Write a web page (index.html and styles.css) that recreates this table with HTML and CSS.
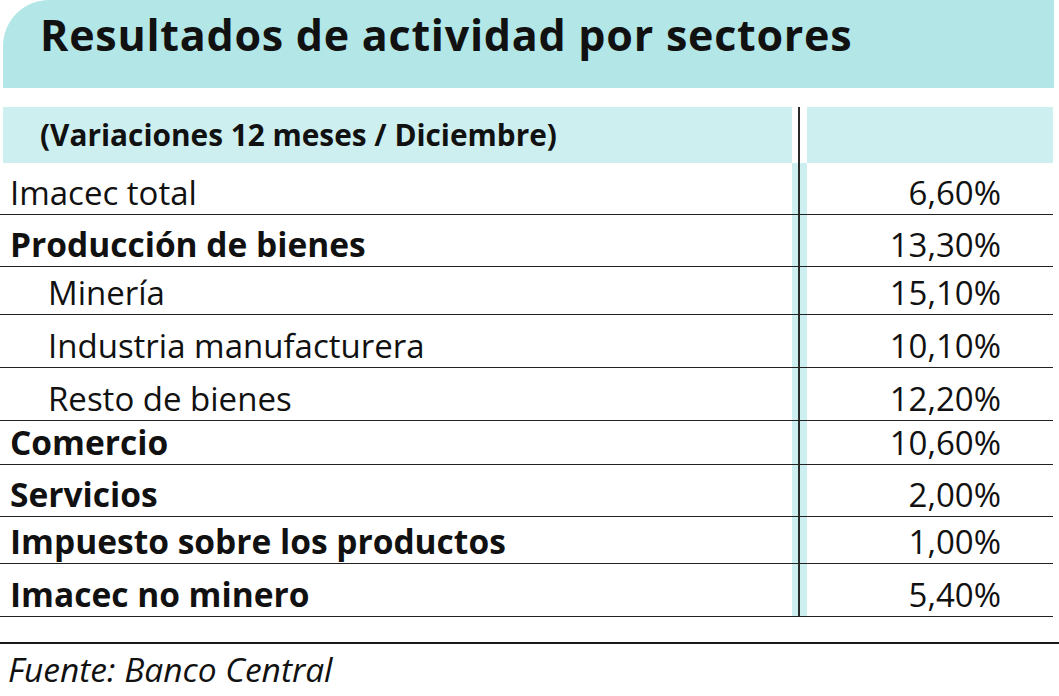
FILE: index.html
```html
<!DOCTYPE html>
<html lang="es">
<head>
<meta charset="utf-8">
<title>Resultados de actividad por sectores</title>
<link rel="stylesheet" href="styles.css">
</head>
<body>
<div class="page">
  <div class="title-bar"><h1 class="title">Resultados de actividad por sectores</h1></div>
  <div class="table">
    <div class="head-row">
      <div class="head-cell head-label">(Variaciones 12 meses / Diciembre)</div>
      <div class="head-sep"></div>
      <div class="head-cell"></div>
    </div>
    <div class="row"><div class="label">Imacec total</div><div class="sep"></div><div class="value">6,60%</div></div>
    <div class="row"><div class="label bold">Producción de bienes</div><div class="sep"></div><div class="value">13,30%</div></div>
    <div class="row"><div class="label sub">Minería</div><div class="sep"></div><div class="value">15,10%</div></div>
    <div class="row"><div class="label sub">Industria manufacturera</div><div class="sep"></div><div class="value">10,10%</div></div>
    <div class="row"><div class="label sub">Resto de bienes</div><div class="sep"></div><div class="value">12,20%</div></div>
    <div class="row"><div class="label bold">Comercio</div><div class="sep"></div><div class="value">10,60%</div></div>
    <div class="row"><div class="label bold">Servicios</div><div class="sep"></div><div class="value">2,00%</div></div>
    <div class="row"><div class="label bold">Impuesto sobre los productos</div><div class="sep"></div><div class="value">1,00%</div></div>
    <div class="row"><div class="label bold">Imacec no minero</div><div class="sep"></div><div class="value">5,40%</div></div>
  </div>
  <div class="footer">
    <p class="source">Fuente: Banco Central</p>
  </div>
</div>
</body>
</html>
```
FILE: styles.css
```css
html, body {
  margin: 0;
  padding: 0;
  background: #ffffff;
}

.page {
  width: 1059px;
  height: 696px;
  overflow: hidden;
  font-family: "Open Sans", "Noto Sans", sans-serif;
  color: #111111;
}

.title-bar {
  margin-left: 3px;
  width: 1051px;
  height: 88px;
  box-sizing: border-box;
  background: #b2e6e7;
  border-top-left-radius: 46px;
  padding: 13px 0 0 37px;
}

.title {
  margin: 0;
  font-size: 43px;
  line-height: 43px;
  font-weight: 700;
  letter-spacing: 0.75px;
  white-space: nowrap;
}

.table {
  margin-top: 19px;
  width: 1053px;
}

.head-row {
  margin-left: 3px;
  height: 56px;
  display: grid;
  grid-template-columns: 789px 15px 246px;
}

.head-cell {
  background: #cdeff0;
  display: flex;
  align-items: center;
}

.head-label {
  padding-left: 37px;
  font-size: 29.8px;
  line-height: 1;
  font-weight: 700;
  white-space: nowrap;
}

.head-sep {
  background: linear-gradient(to right, #ffffff 6.5px, #2a2a2a 6.5px, #2a2a2a 8px, #ffffff 8px);
}

.row {
  height: 50px;
  box-sizing: border-box;
  border-bottom: 1.5px solid #222222;
  display: grid;
  grid-template-columns: 792px 15px 246px;
}

.row:nth-child(2),
.row:nth-child(3),
.row:nth-child(8) {
  height: 52px;
}

.row:nth-child(4) {
  height: 48px;
}

.row:nth-child(5),
.row:nth-child(6),
.row:nth-child(10) {
  height: 53px;
}

.row:nth-child(7) {
  height: 44px;
}

.row:nth-child(9) {
  height: 47px;
}

.label,
.value {
  display: flex;
  align-items: flex-end;
  padding-bottom: 5px;
  font-size: 33px;
  line-height: 33px;
  white-space: nowrap;
}

.label {
  padding-left: 10px;
}

.label.sub {
  padding-left: 48px;
}

.label.bold {
  font-weight: 700;
  font-size: 33.5px;
}

.value {
  justify-content: flex-end;
  padding-right: 52px;
}

.sep {
  background: linear-gradient(to right, #cdeff0 6.5px, #2a2a2a 6.5px, #2a2a2a 8px, #cdeff0 8px);
}

.footer {
  margin-top: 25px;
  border-top: 2.5px solid #1a1a1a;
  padding-top: 9px;
}

.source {
  margin: 0;
  padding-left: 8px;
  font-size: 33.5px;
  line-height: 33.5px;
  font-style: italic;
  white-space: nowrap;
}
```
